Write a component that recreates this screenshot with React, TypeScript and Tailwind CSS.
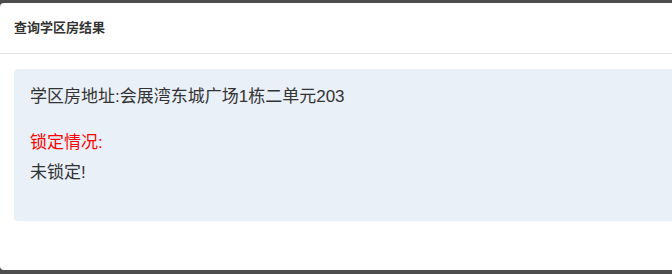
import React from 'react';

const App: React.FC = () => {
  return (
    <div
      className="h-[274px] w-[672px] overflow-hidden bg-[#4d4d4d] pt-[3px] pb-[4px]"
      style={{ fontFamily: '"Liberation Sans", "Noto Sans CJK SC", sans-serif' }}
    >
      <div className="h-full w-[700px] rounded-[4px] bg-white">
        <div className="flex h-[51px] items-center border-b border-[#e5e5e5] px-[14px]">
          <h3 className="text-[13px] font-bold text-[#333]">查询学区房结果</h3>
        </div>
        <div className="px-[14px] pt-[15px]">
          <div className="h-[152px] rounded-[4px] bg-[#e9f0f8] px-4 pt-[16px] text-[17px] leading-[24px] text-[#333]">
            <p>学区房地址:会展湾东城广场1栋二单元203</p>
            <p className="mt-[22px] text-[#ff0000]">锁定情况:</p>
            <p className="mt-[6px]">未锁定!</p>
          </div>
        </div>
      </div>
    </div>
  );
};

export default App;
